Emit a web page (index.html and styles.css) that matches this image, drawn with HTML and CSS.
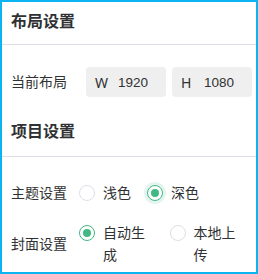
FILE: index.html
```html
<!DOCTYPE html>
<html lang="zh">
<head>
<meta charset="utf-8">
<link rel="stylesheet" href="styles.css">
</head>
<body>
<div class="panel">
  <div class="title title-first">布局设置</div>
  <div class="row row-size">
    <div class="label">当前布局</div>
    <div class="inputs">
      <div class="box"><span class="key">W</span><span class="val">1920</span></div>
      <div class="box"><span class="key">H</span><span class="val">1080</span></div>
    </div>
  </div>
  <div class="title title-second">项目设置</div>
  <div class="row row-theme">
    <div class="label">主题设置</div>
    <div class="options">
      <div class="opt"><span class="radio"></span><span class="txt">浅色</span></div>
      <div class="opt"><span class="radio checked"></span><span class="txt">深色</span></div>
    </div>
  </div>
  <div class="row row-cover">
    <div class="label">封面设置</div>
    <div class="options">
      <div class="opt"><span class="radio checked plain"></span><span class="txt">自动生成</span></div>
      <div class="opt"><span class="radio"></span><span class="txt">本地上传</span></div>
    </div>
  </div>
</div>
</body>
</html>
```
FILE: styles.css
```css
html, body {
  margin: 0;
  padding: 0;
  background: #fff;
}
.panel {
  box-sizing: border-box;
  width: 258px;
  height: 274px;
  border: 2px solid #0bb4f0;
  font-family: "Noto Sans", "Noto Sans CJK SC", sans-serif;
  color: #303133;
  font-size: 14px;
  overflow: hidden;
}
.title {
  padding: 5px 9px 8px;
  font-size: 16px;
  font-weight: bold;
  line-height: 29px;
  border-bottom: 1px solid #dcdfe6;
}
.title-second {
  margin-top: 20px;
  padding-top: 0;
  padding-bottom: 10px;
}
.row {
  display: flex;
  align-items: center;
  padding-left: 9px;
}
.label {
  width: 68px;
  flex: none;
  line-height: 22px;
}
.row-size {
  margin-top: 22px;
}
.inputs {
  display: flex;
  gap: 6px;
  margin-left: 7px;
}
.box {
  box-sizing: border-box;
  width: 80px;
  height: 30px;
  background: #efefef;
  border-radius: 4px;
  display: flex;
  align-items: center;
  padding-left: 9px;
  font-size: 14px;
}
.key {
  width: 23px;
  color: #303133;
}
.val {
  font-family: "Liberation Sans", "Noto Sans", sans-serif;
  font-size: 13.5px;
}
.row-theme {
  margin-top: 25px;
}
.row-cover {
  margin-top: 18px;
  width: 242px;
  box-sizing: border-box;
}
.options {
  display: flex;
  gap: 16px;
  min-width: 0;
}
.opt {
  display: flex;
  align-items: flex-start;
  gap: 8px;
  min-width: 0;
}
.txt {
  line-height: 22px;
  min-width: 0;
}
.radio {
  flex: none;
  box-sizing: border-box;
  width: 16px;
  height: 16px;
  margin-top: 3px;
  border: 1px solid #dcdfe6;
  border-radius: 50%;
  position: relative;
  background: #fff;
}
.radio.checked {
  border-color: #42b983;
  box-shadow: 0 0 0 3px #e3f5ee;
}
.radio.checked.plain {
  box-shadow: none;
}
.radio.checked::after {
  content: "";
  position: absolute;
  left: 3px;
  top: 3px;
  width: 8px;
  height: 8px;
  border-radius: 50%;
  background: #42b983;
}
```
